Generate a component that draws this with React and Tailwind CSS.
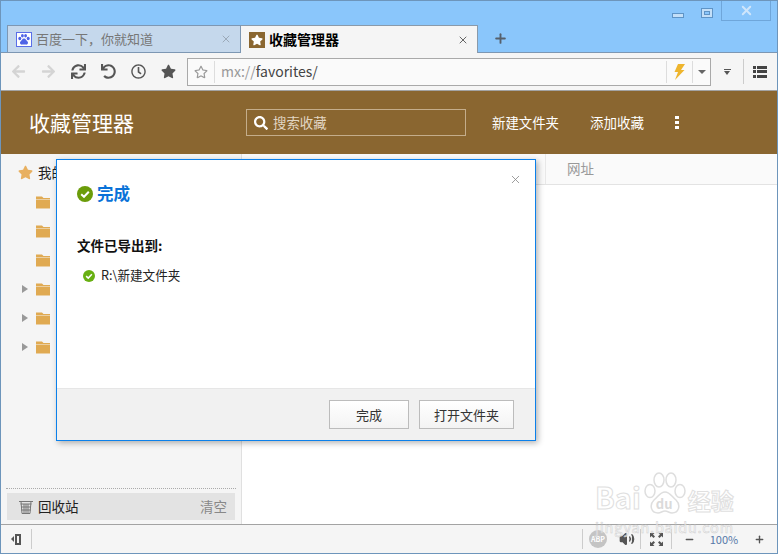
import { Plus, X, Minus, Volume2 } from "lucide-react";
import { FaArrowLeft, FaArrowRight, FaSync, FaUndo, FaRegClock, FaStar, FaRegStar, FaSearch } from "react-icons/fa";

const FONT = "font-['Noto_Sans_CJK_SC','Noto_Sans',sans-serif]";

function CheckCircle({ size, color }) {
  return (
    <svg width={size} height={size} viewBox="0 0 16 16">
      <circle cx="8" cy="8" r="8" fill={color} />
      <path d="M4.2 8.2 7 10.8 11.8 5.8" fill="none" stroke="#fff" strokeWidth="2" />
    </svg>
  );
}

function Folder() {
  return (
    <svg width="14" height="14" viewBox="0 0 14 14">
      <path d="M0 1.5h6l1.5 1.5H14v1.5H0z" fill="#e0aa52" />
      <path d="M0 5h14v8.5H0z" fill="#e0aa52" />
    </svg>
  );
}

function TreeRow({ arrow }) {
  return (
    <div className="flex h-[29px] items-center">
      <div className="w-[15px] shrink-0 pl-[1px]">
        {arrow && <div className="h-0 w-0 border-y-[4.5px] border-l-[6px] border-y-transparent border-l-[#999]" />}
      </div>
      <Folder />
    </div>
  );
}

function Paw() {
  return (
    <svg width="42" height="47" viewBox="0 0 42 47" fill="none" stroke="#dedede" strokeWidth="1.5">
      <ellipse cx="6" cy="19" rx="5" ry="6.500" />
      <ellipse cx="15" cy="8" rx="5" ry="7" />
      <ellipse cx="27" cy="8" rx="5" ry="7" />
      <ellipse cx="36" cy="19" rx="5" ry="6.500" />
      <path d="M21 20c-5 0-7 5-11 8-5 5-3 13 4 13 3 0 4-2 7-2s4 2 7 2c7 0 9-8 4-13-4-3-6-8-11-8z" />
    </svg>
  );
}

export default function App() {
  return (
    <div className={`${FONT} relative flex h-[554px] w-[778px] flex-col overflow-hidden border border-[#6d95bb] bg-[#f5f5f5] text-[13px]`}>
      {/* title bar + tabs */}
      <div className="relative h-[52px] shrink-0 border-b border-[#7d97b3] bg-[#8ac6fb]">
        <div className="absolute right-[6px] top-0 flex items-start">
          <div className="mr-[17px] mt-[12px] h-[5px] w-[12px] border border-[#5f94c6] bg-[#c3dff8]" />
          <div className="mr-[8px] mt-[7px] flex h-[10px] w-[12px] items-center justify-center border border-[#5f94c6] bg-[#c3dff8]">
            <div className="h-[4px] w-[6px] border border-[#5f94c6] bg-[#8ac6fb]" />
          </div>
          <div className="flex h-[20px] w-[50px] items-center justify-center border-x border-b border-[#6fa6da]">
            <X size={15} strokeWidth={3} className="text-[#cfe6fb]" />
          </div>
        </div>
        <div className="flex items-end pl-[6px] pt-[24px]">
          <div className="flex h-[27px] w-[234px] items-center border border-b-0 border-[#7d97b3] bg-[#c5d8ec] pl-[8px] pr-[8px] text-[#777]">
            <div className="flex h-[15px] w-[16px] items-center justify-center border border-[#5a6ee8] bg-white">
              <svg width="12" height="11" viewBox="0 0 12 11" fill="#4f63e6">
                <ellipse cx="1.8" cy="4.5" rx="1.5" ry="1.8" />
                <ellipse cx="4.4" cy="1.8" rx="1.4" ry="1.8" />
                <ellipse cx="7.6" cy="1.8" rx="1.4" ry="1.8" />
                <ellipse cx="10.2" cy="4.5" rx="1.5" ry="1.8" />
                <path d="M6 4.5c-2 0-2 2-3.5 3C1.2 9 2.5 11 4 10.6c1-.3 3-.3 4 0 1.5.4 2.8-1.6 1.5-3.100C8 6.500 8 4.500 6 4.500z" />
              </svg>
            </div>
            <span className="ml-[4px] flex-1 text-[13px]">百度一下，你就知道</span>
            <X size={12} strokeWidth={1.5} className="text-[#8d9aa7]" />
          </div>
          <div className="-mb-px flex h-[28px] w-[237px] items-center border-r border-t border-[#8a9aaa] bg-[#f5f5f5] pl-[8px] pr-[8px] font-bold text-black">
            <div className="flex h-[16px] w-[16px] items-center justify-center bg-[#8a6630]">
              <FaStar size={12} className="text-white" />
            </div>
            <span className="ml-[4px] flex-1 text-[14px]">收藏管理器</span>
            <X size={12} strokeWidth={2} className="text-[#666]" />
          </div>
          <Plus size={15} strokeWidth={3} className="mb-[6px] ml-[15px] text-[#56606c]" />
        </div>
      </div>

      {/* toolbar */}
      <div className="flex h-[38px] shrink-0 items-center border-b border-[#a3a3a3] bg-[#f5f5f5] text-[#555]">
        <div className="flex w-[186px] shrink-0 items-center gap-[15px] pl-[10px]">
          <FaArrowLeft size={15} className="text-[#d4d4d4]" />
          <FaArrowRight size={15} className="text-[#d4d4d4]" />
          <FaSync size={15} />
          <FaUndo size={15} />
          <FaRegClock size={15} />
          <FaStar size={15} />
        </div>
        <div className="flex h-[28px] w-[524px] shrink-0 items-center border border-[#a9a9a9] bg-[#fafafa]">
          <div className="flex h-[22px] w-[27px] items-center justify-center border-r border-[#ddd]">
            <FaRegStar size={14} className="text-[#999]" />
          </div>
          <div className="flex-1 pl-[6px] text-[14px]"><span className="text-[#999]">mx://</span><span className="text-[#444]">favorites/</span></div>
          <div className="flex h-[22px] w-[27px] items-center justify-center border-x border-[#ddd]">
            <svg width="11" height="16" viewBox="0 0 11 16"><path d="M4 0h7L7 6h3.500L1 16l3-8H0.500z" fill="#eeb52e" /></svg>
          </div>
          <div className="flex w-[17px] justify-center">
            <div className="h-0 w-0 border-x-[4px] border-t-[4px] border-x-transparent border-t-[#666]" />
          </div>
        </div>
        <div className="flex w-[32px] shrink-0 flex-col items-center gap-[1px]">
          <div className="h-[1px] w-[7px] bg-[#555]" />
          <div className="h-0 w-0 border-x-[3.500px] border-t-[4px] border-x-transparent border-t-[#555]" />
        </div>
        <div className="h-[25px] w-px shrink-0 bg-[#ccc]" />
        <div className="flex flex-1 justify-center pr-[1px]">
          <div className="grid grid-cols-[3px_10px] gap-x-[1px] gap-y-[1.500px]">
            <div className="h-[3px] bg-[#444]" /><div className="h-[3px] bg-[#444]" />
            <div className="h-[3px] bg-[#444]" /><div className="h-[3px] bg-[#444]" />
            <div className="h-[3px] bg-[#444]" /><div className="h-[3px] bg-[#444]" />
          </div>
        </div>
      </div>

      {/* brown header */}
      <div className="flex h-[63px] shrink-0 items-center bg-[#8a6630] pl-[28px] text-white">
        <div className="w-[217px] text-[21px]">收藏管理器</div>
        <div className="flex h-[27px] w-[220px] items-center border border-[#c4ad8b] pl-[7px] text-[13.400px] text-[#e2d6c4]">
          <FaSearch size={14} className="text-white" />
          <span className="ml-[5px]">搜索收藏</span>
        </div>
        <span className="ml-[26px] text-[13.400px]">新建文件夹</span>
        <span className="ml-[31px] text-[13.500px]">添加收藏</span>
        <div className="ml-[31px] flex flex-col gap-[2px]">
          <div className="h-[3px] w-[4px] bg-white" />
          <div className="h-[3px] w-[4px] bg-white" />
          <div className="h-[3px] w-[4px] bg-white" />
        </div>
      </div>

      {/* body */}
      <div className="flex min-h-0 flex-1">
        <div className="flex w-[241px] shrink-0 flex-col border-r border-[#e0e0e0] bg-[#f5f5f5]">
          <div className="flex-1 pl-[17px] pt-[4px]">
            <div className="flex h-[29px] items-center text-[13.500px] text-[#222]">
              <FaStar size={15} className="text-[#e8b060]" />
              <span className="ml-[5px]">我的收藏</span>
            </div>
            <div className="pl-[3px]">
              <TreeRow /><TreeRow /><TreeRow /><TreeRow arrow /><TreeRow arrow /><TreeRow arrow />
            </div>
          </div>
          <div className="mx-[5px] border-t border-dotted border-[#aaa] pb-[4px]" />
          <div className="mx-[6px] mb-[4px] flex h-[27px] items-center bg-[#e3e3e3] pl-[12px] pr-[8px]">
            <svg width="14" height="14" viewBox="0 0 14 14" fill="none" stroke="#777">
              <path d="M0 1.500h14M1.500 4h11M2 1.500 3 13.500h8l1-12M5 4v9.500M7 4v9.500M9 4v9.500M2 7h10M2 10h10" />
            </svg>
            <span className="ml-[5px] flex-1 text-[13.500px] text-[#222]">回收站</span>
            <span className="text-[13.500px] text-[#888]">清空</span>
          </div>
        </div>
        <div className="flex-1 bg-white">
          <div className="flex h-[31px] border-b border-[#e3e3e3] bg-[#fafafa]">
            <div className="w-[304px] border-r border-[#e8e8e8]" />
            <div className="pl-[21px] pt-[4px] text-[13.500px] text-[#999]">网址</div>
          </div>
        </div>
      </div>

      {/* status bar */}
      <div className="flex h-[29px] shrink-0 items-center border-t border-[#a3a3a3] bg-[#f5f5f5] text-[#555]">
        <div className="flex w-[30px] items-center justify-center">
          <div className="h-0 w-0 border-y-[3px] border-r-[3px] border-y-transparent border-r-[#555]" />
          <div className="ml-[1px] h-[11px] w-[6px] border-2 border-[#555]" />
        </div>
        <div className="h-[20px] w-px bg-[#ccc]" />
        <div className="flex-1" />
        <div className="h-[20px] w-px bg-[#ccc]" />
        <div className="flex w-[30px] justify-center">
          <div className="flex h-[18px] w-[18px] items-center justify-center rounded-full bg-[#c4c4c4] text-[7px] font-bold leading-none text-white">ABP</div>
        </div>
        <div className="flex w-[27px] justify-center"><Volume2 size={16} fill="#555" /></div>
        <div className="h-[20px] w-px bg-[#ccc]" />
        <div className="flex w-[30px] justify-center">
          <svg width="13" height="13" viewBox="0 0 13 13" fill="#555">
            <path d="M0 0h4.500L3 1.500 5 3.500 3.500 5 1.500 3 0 4.500zM13 0v4.500L11.500 3 9.500 5 8 3.500 10 1.500 8.500 0zM0 13V8.500L1.500 10 3.500 8 5 9.500 3 11.500 4.500 13zM13 13H8.500L10 11.500 8 9.500 9.500 8 11.500 10 13 8.500z" />
          </svg>
        </div>
        <div className="h-[20px] w-px bg-[#ccc]" />
        <div className="flex w-[35px] justify-center"><Minus size={11} strokeWidth={3} /></div>
        <span className="w-[34px] text-center text-[11px] leading-none text-[#5578a8]">100%</span>
        <div className="flex w-[36px] justify-center pl-[1px] pr-[1px]"><Plus size={11} strokeWidth={3} /></div>
      </div>

      {/* dialog */}
      <div className="absolute left-[55px] top-[158px] flex h-[282px] w-[480px] flex-col border border-[#0b80ea] bg-white shadow-[2px_2px_6px_rgba(0,0,0,0.3)]">
        <div className="relative flex-1 pl-[20px] pt-[22px]">
          <X size={13} strokeWidth={1.500} className="absolute right-[13px] top-[13px] text-[#888]" />
          <div className="flex h-[23px] items-center">
            <CheckCircle size={16} color="#6b9c0a" />
            <span className="ml-[4px] text-[16.500px] font-bold text-[#0a72d8]">完成</span>
          </div>
          <div className="mt-[30px] text-[13.500px] font-bold text-[#111]">文件已导出到:</div>
          <div className="mt-[11px] flex items-center pl-[6px]">
            <CheckCircle size={12} color="#68b012" />
            <span className="ml-[6px] text-[12.600px] text-[#222]">R:\新建文件夹</span>
          </div>
        </div>
        <div className="flex h-[52px] shrink-0 items-center justify-end gap-[10px] border-t border-[#e6e6e6] bg-[#f1f1f1] pr-[21px] text-[13px] text-[#333]">
          <button className="h-[29px] w-[80px] border border-[#bcbcbc] bg-gradient-to-b from-white to-[#f3f3f3]">完成</button>
          <button className="h-[29px] w-[95px] border border-[#bcbcbc] bg-gradient-to-b from-white to-[#f3f3f3]">打开文件夹</button>
        </div>
      </div>

      {/* watermark */}
      <div className="pointer-events-none absolute left-[594px] top-[469px] flex flex-col items-center">
        <div className="flex h-[49px] items-end">
          <span className="pb-[8px] text-[29px] font-bold leading-none text-white [-webkit-text-stroke:1px_#e0e0e0]">Bai</span>
          <div className="relative ml-[3px] h-[47px] w-[42px]">
            <Paw />
            <span className="absolute bottom-[9px] left-[12px] text-[13px] font-bold leading-none text-[#dadada]">du</span>
          </div>
          <span className="ml-[2px] pb-[7px] text-[23px] font-bold leading-none text-white [-webkit-text-stroke:1px_#e0e0e0]">经验</span>
        </div>
        <span className="mt-[1px] h-[13px] text-[14.500px] leading-[13px] tracking-[0.8px] text-white/60 [-webkit-text-stroke:0.5px_#cfcfcf]">jingyan.baidu.com</span>
      </div>
    </div>
  );
}
